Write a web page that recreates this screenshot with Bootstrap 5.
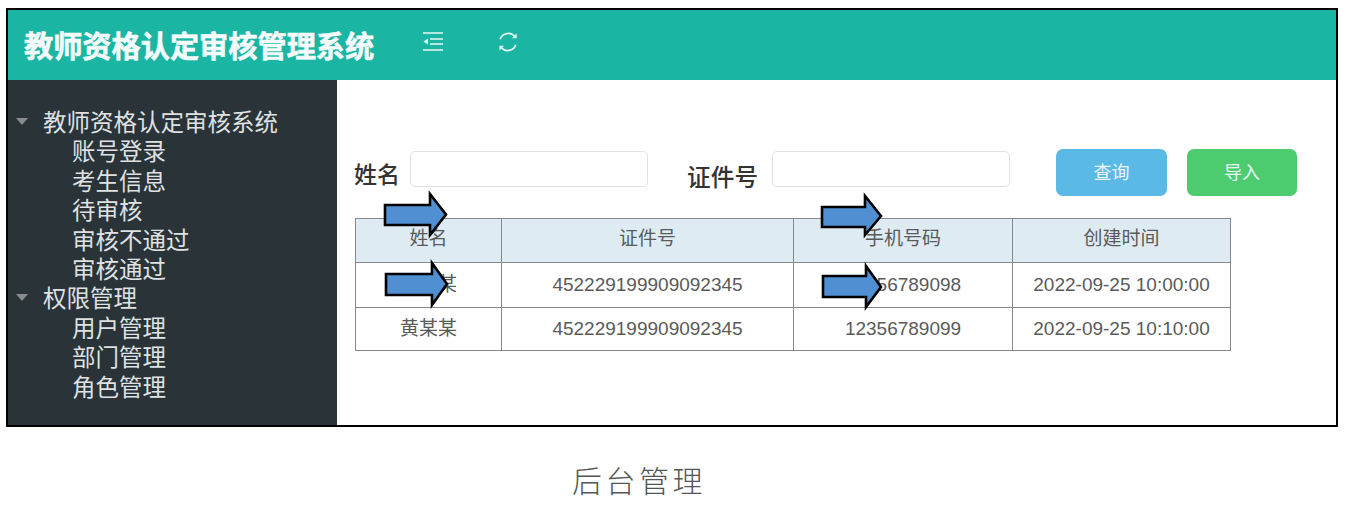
<!DOCTYPE html>
<html lang="zh">
<head>
<meta charset="utf-8">
<title>后台管理</title>
<link href="https://cdn.jsdelivr.net/npm/bootstrap@5.3.0/dist/css/bootstrap.min.css" rel="stylesheet">
<style>
body{background:#fff;font-family:"Liberation Sans","Noto Sans CJK SC",sans-serif;overflow:hidden}
.shot{width:1332px;height:419px;margin:8px 0 0 6px;border:2px solid #000;position:relative;background:#fff}
.topbar{height:70px;background:#1ab5a3;padding-left:16px;gap:49px;color:#fff}
.brand{font-size:29.2px;font-weight:700;line-height:1;color:#f4fbfa;margin-top:5px;white-space:nowrap;-webkit-text-stroke:.6px #f4fbfa}
.tool-icons{gap:54px;margin-top:-7px}
.side{width:329px;height:345px;background:#293338;padding-top:29px;color:#dfe1e2;font-size:23.5px;line-height:29.4px;flex:none}
.side ul{margin:0;padding:0;list-style:none}
.side .grp{padding-left:35px;position:relative;display:block}
.side .grp::before{content:"";position:absolute;left:8px;top:9px;border:6.5px solid transparent;border-top:7px solid #8a8c8c;border-bottom:0}
.side .sub{padding-left:64px}
.content{padding:69px 0 0 17px;min-width:0;flex:1}
.flabel{font-size:23px;font-weight:500;color:#333;line-height:28px}
.lbl2{font-size:23.7px;margin:15px 14px 0 39px}
.lbl1{margin:12px 10px 0 0}
.finput{width:238px;height:36px;border:1.5px solid #e2e2e2;border-radius:5px;background:#fff}
.fbtn{height:47px;border:0;border-radius:7px;color:#eaf6fb;font-size:18px;padding:2px 0 0;font-family:inherit}
.fbtn-q{width:111px;background:#5bb9e6}
.fbtn-i{width:110px;background:#4ccb6f}
.fbtn-q:hover{background:#5bb9e6;color:#eaf6fb}
.fbtn-i:hover{background:#4ccb6f;color:#eaf6fb}
.in1{margin-top:2px}
.btn1{margin-left:46px}
.btn2{margin-left:20px}
.datatable{width:875px;margin:22px 0 0 1px;border-collapse:collapse;table-layout:fixed;color:#5a5a5a;font-size:19px}
.datatable th,.datatable td{border:1px solid #85898d;padding:0;text-align:center;vertical-align:middle;font-weight:400;color:#5a5a5a;line-height:1.2}
.datatable th{background:#deebf3;height:44px;padding-bottom:2px}
.datatable td{height:45px;background:#fff}
.datatable tr:last-child td{height:43px}
.arrows{position:absolute;left:0;top:0;pointer-events:none}
.caption{width:1346px;padding-left:572px;margin-top:36px;font-size:30px;font-weight:300;letter-spacing:3.5px;color:#555;line-height:38px;white-space:nowrap}
</style>
</head>
<body>
<div class="shot">
  <div class="topbar d-flex align-items-center">
    <div class="brand">教师资格认定审核管理系统</div>
    <div class="tool-icons d-flex align-items-center">
      <svg width="20" height="19" viewBox="0 0 20 19" fill="none" stroke="#e9f8f6" stroke-width="1.6"><path d="M0 1h20M7 7h13M7 12h13M0 18h20"/><path d="M5 6.500v6L0.500 9.500z" fill="#e9f8f6" stroke="none"/></svg>
      <svg width="22" height="22" viewBox="0 0 22 22" fill="none" stroke="#e9f8f6" stroke-width="1.7"><path d="M3.200 8.200A8.400 8.400 0 0 1 18 6"/><path d="M18.800 13.800A8.400 8.400 0 0 1 4 16"/><path d="M19.600 2.600v4.600h-4.600z" fill="#e9f8f6" stroke="none"/><path d="M2.400 19.400v-4.600h4.600z" fill="#e9f8f6" stroke="none"/></svg>
    </div>
  </div>
  <div class="d-flex">
    <aside class="side">
      <ul>
        <li><span class="grp">教师资格认定审核系统</span>
          <ul class="sub"><li>账号登录</li><li>考生信息</li><li>待审核</li><li>审核不通过</li><li>审核通过</li></ul></li>
        <li><span class="grp">权限管理</span>
          <ul class="sub"><li>用户管理</li><li>部门管理</li><li>角色管理</li></ul></li>
      </ul>
    </aside>
    <main class="content">
      <form class="d-flex align-items-start">
        <label class="flabel lbl1">姓名</label>
        <input class="finput in1" type="text">
        <label class="flabel lbl2">证件号</label>
        <input class="finput in1" type="text">
        <button class="btn fbtn fbtn-q btn1" type="button">查询</button>
        <button class="btn fbtn fbtn-i btn2" type="button">导入</button>
      </form>
      <table class="datatable">
        <colgroup><col style="width:146px"><col style="width:292px"><col style="width:219px"><col style="width:218px"></colgroup>
        <thead><tr><th>姓名</th><th>证件号</th><th>手机号码</th><th>创建时间</th></tr></thead>
        <tbody>
          <tr><td>黄某某</td><td>452229199909092345</td><td>12356789098</td><td>2022-09-25 10:00:00</td></tr>
          <tr><td>黄某某</td><td>452229199909092345</td><td>12356789099</td><td>2022-09-25 10:10:00</td></tr>
        </tbody>
      </table>
    </main>
  </div>
  <svg class="arrows" width="1332" height="419" viewBox="8 10 1332 419">
    <g fill="#5090d2" stroke="#000" stroke-width="2.600" stroke-linejoin="miter">
      <path d="M385 205H430V194L446 214.500L430 235V225H385Z"/>
      <path d="M386 274H432V263L447 284L432 305V295H386Z"/>
      <path d="M822 207H865V196L881 216L865 235V227H822Z"/>
      <path d="M823 276H866V266L881 287L866 307V297H823Z"/>
    </g>
  </svg>
</div>
<div class="caption">后台管理</div>
<script src="https://cdn.jsdelivr.net/npm/bootstrap@5.3.0/dist/js/bootstrap.bundle.min.js"></script>
</body>
</html>
